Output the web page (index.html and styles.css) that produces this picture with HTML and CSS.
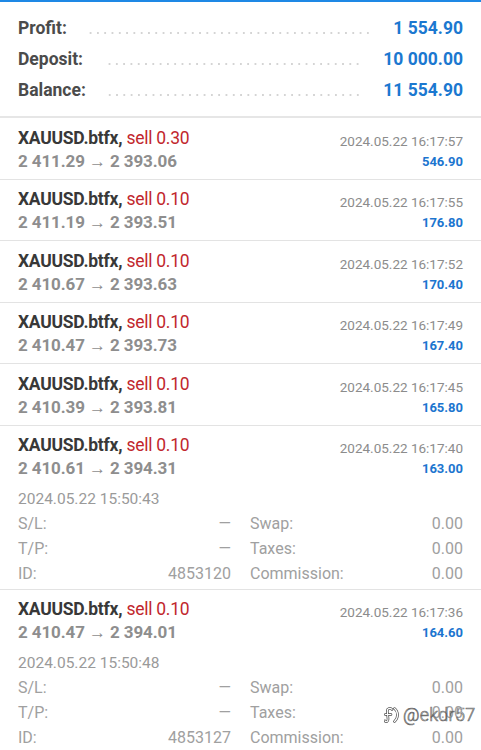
FILE: index.html
```html
<!DOCTYPE html>
<html>
<head>
<meta charset="utf-8">
<link rel="stylesheet" href="styles.css">
</head>
<body>
<div class="topline"></div>
<section class="summary">
  <div class="sum-row"><span class="sum-label">Profit:</span><span class="dots"></span><span class="sum-value">1 554.90</span></div>
  <div class="sum-row"><span class="sum-label">Deposit:</span><span class="dots"></span><span class="sum-value">10 000.00</span></div>
  <div class="sum-row"><span class="sum-label">Balance:</span><span class="dots"></span><span class="sum-value">11 554.90</span></div>
</section>
<section class="trades">
  <div class="trade">
    <div class="head">
      <div class="left"><div class="title">XAUUSD.btfx, <span class="sell">sell 0.30</span></div><div class="prices">2 411.29 → 2 393.06</div></div>
      <div class="right"><div class="time">2024.05.22 16:17:57</div><div class="profit">546.90</div></div>
    </div>
  </div>
  <div class="trade">
    <div class="head">
      <div class="left"><div class="title">XAUUSD.btfx, <span class="sell">sell 0.10</span></div><div class="prices">2 411.19 → 2 393.51</div></div>
      <div class="right"><div class="time">2024.05.22 16:17:55</div><div class="profit">176.80</div></div>
    </div>
  </div>
  <div class="trade">
    <div class="head">
      <div class="left"><div class="title">XAUUSD.btfx, <span class="sell">sell 0.10</span></div><div class="prices">2 410.67 → 2 393.63</div></div>
      <div class="right"><div class="time">2024.05.22 16:17:52</div><div class="profit">170.40</div></div>
    </div>
  </div>
  <div class="trade">
    <div class="head">
      <div class="left"><div class="title">XAUUSD.btfx, <span class="sell">sell 0.10</span></div><div class="prices">2 410.47 → 2 393.73</div></div>
      <div class="right"><div class="time">2024.05.22 16:17:49</div><div class="profit">167.40</div></div>
    </div>
  </div>
  <div class="trade">
    <div class="head">
      <div class="left"><div class="title">XAUUSD.btfx, <span class="sell">sell 0.10</span></div><div class="prices">2 410.39 → 2 393.81</div></div>
      <div class="right"><div class="time">2024.05.22 16:17:45</div><div class="profit">165.80</div></div>
    </div>
  </div>
  <div class="trade expanded">
    <div class="head">
      <div class="left"><div class="title">XAUUSD.btfx, <span class="sell">sell 0.10</span></div><div class="prices">2 410.61 → 2 394.31</div></div>
      <div class="right"><div class="time">2024.05.22 16:17:40</div><div class="profit">163.00</div></div>
    </div>
    <div class="open-time">2024.05.22 15:50:43</div>
    <div class="details">
      <div class="pair"><span>S/L:</span><span>—</span></div>
      <div class="pair"><span>Swap:</span><span>0.00</span></div>
      <div class="pair"><span>T/P:</span><span>—</span></div>
      <div class="pair"><span>Taxes:</span><span>0.00</span></div>
      <div class="pair"><span>ID:</span><span>4853120</span></div>
      <div class="pair"><span>Commission:</span><span>0.00</span></div>
    </div>
  </div>
  <div class="trade expanded">
    <div class="head">
      <div class="left"><div class="title">XAUUSD.btfx, <span class="sell">sell 0.10</span></div><div class="prices">2 410.47 → 2 394.01</div></div>
      <div class="right"><div class="time">2024.05.22 16:17:36</div><div class="profit">164.60</div></div>
    </div>
    <div class="open-time">2024.05.22 15:50:48</div>
    <div class="details">
      <div class="pair"><span>S/L:</span><span>—</span></div>
      <div class="pair"><span>Swap:</span><span>0.00</span></div>
      <div class="pair"><span>T/P:</span><span>—</span></div>
      <div class="pair"><span>Taxes:</span><span>0.00</span></div>
      <div class="pair"><span>ID:</span><span>4853127</span></div>
      <div class="pair"><span>Commission:</span><span>0.00</span></div>
    </div>
  </div>
</section>
<div class="watermark">
  <svg class="wm-icon" width="18" height="20" viewBox="0 0 18 20"><path d="M8 4.5 C6.5 2.5 3 3 3.3 6.5 L4 13.5 C4.3 17 1.8 17.5 1 15.8 M1.2 9.5 L7 9.5 M10.5 3.5 C14.5 6.5 14.5 13 10.5 16.5" fill="none" stroke="#4a4a4a" stroke-width="2.6" stroke-linecap="round"/><path d="M8 4.5 C6.5 2.5 3 3 3.3 6.5 L4 13.5 C4.3 17 1.8 17.5 1 15.8 M1.2 9.5 L7 9.5 M10.5 3.5 C14.5 6.5 14.5 13 10.5 16.5" fill="none" stroke="#fff" stroke-width="1.2" stroke-linecap="round"/></svg>
  <span class="wm-text">@ekdr57</span>
</div>
</body>
</html>
```

FILE: styles.css
```css
* { box-sizing: border-box; }
html, body { margin: 0; padding: 0; background: #fff; }
body {
  font-family: Roboto, "Noto Sans", "Liberation Sans", sans-serif;
  width: 481px;
  height: 750px;
  overflow: hidden;
  position: relative;
}
.topline { height: 2px; background: #1e88e5; }
.summary {
  padding: 10.5px 18px 10.5px;
  border-bottom: 2px solid #e6e6e6;
}
.sum-row {
  display: flex;
  align-items: baseline;
  height: 31px;
  line-height: 31px;
  font-size: 17.5px;
  font-weight: 700;
}
.sum-label { color: #4b4b4b; }
.sum-value { color: #1b78d0; }
.dots {
  flex: 1;
  height: 2px;
  margin: 0 22px;
  align-self: center;
  transform: translateY(5px);
  background-image: radial-gradient(circle, #d4d4d4 0.9px, transparent 1.1px);
  background-size: 7.3px 2px;
  background-repeat: repeat-x;
  background-position: right center;
}
.trade {
  padding: 8.5px 18px 6px;
  border-bottom: 1px solid #e3e3e3;
}
.trade.expanded { padding-bottom: 3px; }
.head { display: flex; justify-content: space-between; }
.title {
  font-size: 17.5px;
  font-weight: 700;
  line-height: 23px;
  letter-spacing: -0.25px;
  color: #383838;
}
.sell { font-weight: 400; color: #c1272d; }
.prices {
  font-size: 17px;
  font-weight: 700;
  line-height: 23px;
  letter-spacing: -0.1px;
  color: #8e8e8e;
}
.right { text-align: right; padding-top: 3px; }
.time {
  font-size: 13.5px;
  line-height: 22px;
  color: #8c8c8c;
}
.profit {
  font-size: 13px;
  font-weight: 700;
  line-height: 20px;
  color: #1c75cf;
}
.open-time {
  margin-top: 6.5px;
  font-size: 15.5px;
  line-height: 24px;
  color: #9a9a9a;
}
.details {
  display: grid;
  grid-template-columns: 1fr 1fr;
  column-gap: 19px;
  font-size: 16px;
  line-height: 25px;
  color: #a0a0a0;
}
.pair { display: flex; justify-content: space-between; }
.watermark {
  position: absolute;
  left: 384px;
  top: 704px;
  display: flex;
  align-items: center;
  gap: 1px;
}
.wm-text {
  font-size: 18px;
  font-weight: 300;
  color: rgba(255,255,255,0.9);
  -webkit-text-stroke: 0.7px rgba(70,70,70,0.8);
  letter-spacing: 0.3px;
}
```
